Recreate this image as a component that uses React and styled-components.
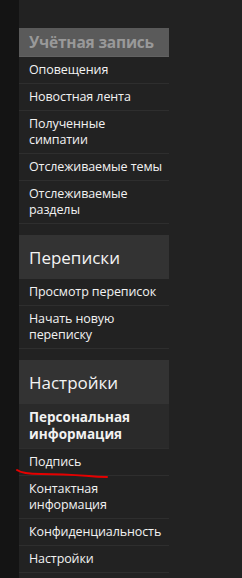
import styled, { createGlobalStyle } from "styled-components";

const GlobalStyle = createGlobalStyle`
  html, body {
    margin: 0;
    padding: 0;
    background: #222222;
  }
  body {
    font-family: "Open Sans", "Liberation Sans", sans-serif;
  }
`;

const Page = styled.div`
  display: flex;
  min-height: 578px;
  position: relative;
`;

const Strip = styled.div`
  width: 19px;
  flex-shrink: 0;
  background: #141414;
`;

const Sidebar = styled.nav`
  width: 150px;
  padding-top: 28px;
  display: flex;
  flex-direction: column;
  gap: 11px;
`;

const Section = styled.div`
  display: flex;
  flex-direction: column;
`;

const Header = styled.div`
  box-sizing: border-box;
  padding: 0 10px;
  display: flex;
  align-items: center;
  height: ${(p) => (p.$primary ? "29px" : "44px")};
  background: ${(p) => (p.$primary ? "#5a5a5a" : "#333333")};
  border-bottom: ${(p) => (p.$primary ? "1px solid #626262" : "none")};
  color: ${(p) => (p.$primary ? "#999999" : "#f4f4f4")};
  font-size: ${(p) => (p.$primary ? "15.5px" : "17px")};
  font-weight: ${(p) => (p.$primary ? 700 : 400)};
  letter-spacing: ${(p) => (p.$primary ? "-0.2px" : "0")};
  white-space: nowrap;
`;

const Item = styled.a`
  display: block;
  padding: 5px 10px;
  color: #f2f2f2;
  text-decoration: none;
  white-space: nowrap;
  font-weight: ${(p) => (p.$active ? 700 : 400)};
  font-size: ${(p) => (p.$active ? "13.5px" : "12.5px")};
  line-height: ${(p) => (p.$active ? "17px" : "16px")};
  letter-spacing: ${(p) => (p.$active ? "0" : "-0.1px")};
  background: ${(p) => (p.$active ? "#2a2a2a" : "transparent")};
  border-bottom: 1px solid #2e2e2e;
`;

const Mark = styled.svg`
  position: absolute;
  left: 15px;
  top: 466px;
  pointer-events: none;
`;

const sections = [
  {
    title: "Учётная запись",
    primary: true,
    items: [
      ["Оповещения"],
      ["Новостная лента"],
      ["Полученные", "симпатии"],
      ["Отслеживаемые темы"],
      ["Отслеживаемые", "разделы"],
    ],
  },
  {
    title: "Переписки",
    items: [["Просмотр переписок"], ["Начать новую", "переписку"]],
  },
  {
    title: "Настройки",
    items: [
      ["Персональная", "информация"],
      ["Подпись"],
      ["Контактная", "информация"],
      ["Конфиденциальность"],
      ["Настройки"],
    ],
    active: 0,
  },
];

export default function App() {
  return (
    <>
      <GlobalStyle />
      <Page>
        <Strip />
        <Sidebar>
          {sections.map((s) => (
            <Section key={s.title}>
              <Header $primary={s.primary}>{s.title}</Header>
              {s.items.map((lines, i) => (
                <Item key={lines.join(" ")} href="#" $active={s.active === i}>
                  {lines.map((l, j) => (
                    <span key={l}>
                      {j > 0 && <br />}
                      {l}
                    </span>
                  ))}
                </Item>
              ))}
            </Section>
          ))}
        </Sidebar>
        <Mark width="96" height="16" viewBox="0 0 96 16">
          <path
            d="M2 4 C6 7, 14 8, 26 8 C45 8, 60 9, 74 10 C82 11, 88 11, 92 11"
            fill="none"
            stroke="#e50000"
            strokeWidth="2"
            strokeLinecap="round"
          />
        </Mark>
      </Page>
    </>
  );
}
